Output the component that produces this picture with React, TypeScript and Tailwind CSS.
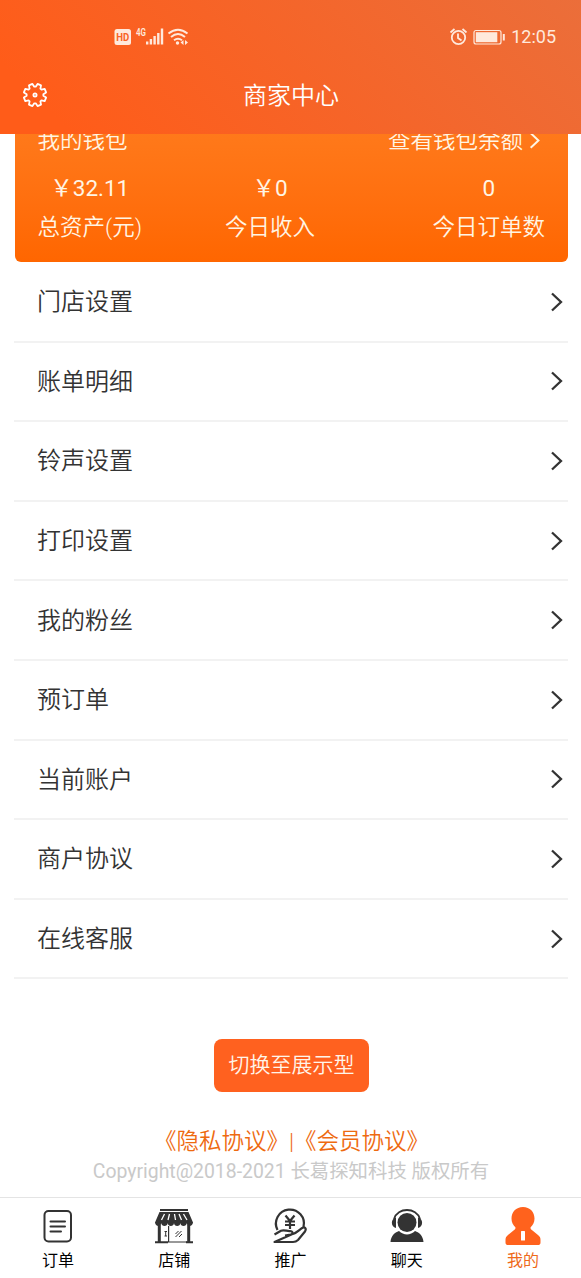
import React from 'react';

const MENU = ['门店设置', '账单明细', '铃声设置', '打印设置', '我的粉丝', '预订单', '当前账户', '商户协议', '在线客服'];

const STATS = [
  { value: '￥32.11', label: '总资产(元)', place: '' },
  { value: '￥0', label: '今日收入', place: 'ml-[83px]' },
  { value: '0', label: '今日订单数', place: 'ml-auto' },
];

const StatusBar: React.FC = () => (
  <div className="flex h-[74px] items-center justify-between pl-[114px] pr-[25px] text-[#ffe9dc]">
    <div className="flex items-center">
      <svg width="76" height="20" viewBox="0 0 76 20" fill="currentColor">
        <rect x="0.5" y="2" width="16.5" height="16" rx="2.5" />
        <text x="8.7" y="14" textAnchor="middle" fontSize="11" fontWeight="700" textLength="13" lengthAdjust="spacingAndGlyphs" fill="#f96325">HD</text>
        <text x="22" y="9" fontSize="10" fontWeight="600" textLength="10" lengthAdjust="spacingAndGlyphs">4G</text>
        <rect x="32" y="14.5" width="2.4" height="3" />
        <rect x="35.7" y="12" width="2.4" height="5.5" />
        <rect x="39.4" y="9" width="2.4" height="8.5" />
        <rect x="43.1" y="6" width="2.4" height="11.5" />
        <rect x="46.8" y="1.5" width="2.4" height="16" />
        <g fill="none" stroke="currentColor" strokeWidth="1.9">
          <path d="M54.5 6.5Q64 -1 73.5 6.5" />
          <path d="M57 10Q64 4 71 10" />
          <path d="M60 13.3Q64 10 68 13.3" />
        </g>
        <circle cx="63.5" cy="16" r="1.7" />
        <path d="M69.5 13v5l-3-2.5zM71 13v5l3-2.5z" />
      </svg>
    </div>
    <div className="flex items-center">
      <svg width="62" height="20" viewBox="0 0 62 20" fill="none" stroke="currentColor" strokeWidth="1.8">
        <circle cx="9.5" cy="10.5" r="6.7" />
        <path d="M9 6.5v4.5l3.5 2.5M1.5 5.5l4-3.5M17.5 5.5l-4-3.5" />
        <rect x="25" y="3.5" width="27" height="13.5" rx="2" strokeWidth="1.2" />
        <rect x="26.8" y="5.2" width="21.5" height="10" fill="currentColor" stroke="none" />
        <path d="M54.8 7v6.5" strokeWidth="2" />
      </svg>
      <span className="text-[18px] leading-none">12:05</span>
    </div>
  </div>
);

// eight rounded teeth around the centre, with a gap facing up
const GEAR = Array.from({ length: 8 }, (_, i) =>
  [[5, 8.4], [13, 11.4], [32, 11.4], [40, 8.4]].map(([deg, r]) => {
    const a = ((i * 45 + deg - 90) * Math.PI) / 180;
    return `${(13 + r * Math.cos(a)).toFixed(2)},${(13 + r * Math.sin(a)).toFixed(2)}`;
  }).join(' ')
).join(' ');

const GearIcon: React.FC = () => (
  <svg width="26" height="26" viewBox="0 0 26 26" fill="none" stroke="currentColor" strokeWidth="1.8" strokeLinejoin="round">
    <polygon points={GEAR} />
    <circle cx="13" cy="13" r="1.6" />
  </svg>
);

const Chevron: React.FC<{ className?: string }> = ({ className }) => (
  <svg width="14" height="22" viewBox="0 0 14 22" fill="none" stroke="currentColor" strokeWidth="2.3" className={className}>
    <path d="M2 2.5l9 8.5-9 8.5" />
  </svg>
);

const OrderIcon: React.FC = () => (
  <svg width="40" height="40" viewBox="0 0 40 40" fill="none" stroke="#333" strokeWidth="2" strokeLinecap="round">
    <rect x="6.5" y="5" width="26.5" height="30.5" rx="4" />
    <path d="M12.5 15.500h14.500M12.500 20.500h14.500M12.500 25.500h10.500" />
  </svg>
);

const ShopIcon: React.FC = () => (
  <svg width="40" height="40" viewBox="0 0 40 40" fill="#333">
    <path d="M6 3h28v2H6zM5.500 6h29l4.500 10.500H1z" />
    <path d="M1 16h38c0 5-6.300 5-6.300 1c0 4-6.300 4-6.300 0c0 4-6.400 4-6.400 0c0 4-6.300 4-6.300 0c0 4-6.400 4-6.400 0C7.300 21 1 21 1 16z" />
    <path d="M10.500 8l-3 6M15.500 8l-1.500 6M20.500 8l1 6M25 8l2.500 6M29.500 8l3.500 6" stroke="#fff" strokeWidth="1.300" />
    <path d="M3.800 19h3v16.500h-3zM33.200 19h3v16.500h-3zM1 35.300h13v2H1zM32 35.300h7v2h-7zM14 20h1.200v16H14z" />
    <path d="M10.500 25.500h2.500M10.500 30h2.500M11.700 25.500v4.500M14 36h19M21.500 28l3-3M21.500 31l6-6M25 31l3-3" stroke="#333" strokeWidth="1" />
  </svg>
);

const PromoteIcon: React.FC = () => (
  <svg width="40" height="40" viewBox="0 0 40 40" fill="none" stroke="#333" strokeWidth="2.2" strokeLinejoin="round">
    <path d="M7.500 24a14 14 0 1 1 26-3" />
    <path d="M15.500 9.500l4.500 5.500l4.500-5.500M20 14.500v8.500M15 15.500h10M15 19h10" />
    <path d="M4.500 28.500L11 24.800c3-1.300 6 .5 9 .2c3 0 3.500 3 .5 3.600L15 29.500M22 28.200c4-.7 7-4 9.800-6c3-1.800 5 .3 3.200 3.300L28 34c-1.500 1.500-3 2-5 2H4.500z" />
  </svg>
);

const ChatIcon: React.FC = () => (
  <svg width="40" height="40" viewBox="0 0 40 40" fill="#333">
    <circle cx="20" cy="16.500" r="9.500" />
    <path d="M7 13C10.500 1 29.500 1 33 13" fill="none" stroke="#333" strokeWidth="1.800" />
    <path d="M9 11.500v10.500C3.500 21 3.500 12.500 9 11.500zM31 11.500v10.500c5.500-1 5.500-9.500 0-10.500zM3.500 36c.5-6 4-9.500 8.500-11c4.500 4.500 11.500 4.500 16 0C32.500 26.500 36 30 36.500 36z" />
  </svg>
);

const MineIcon: React.FC = () => (
  <svg width="40" height="40" viewBox="0 0 40 40" fill="#ff621d">
    <path d="M20 1c7 0 11.500 5 11.500 11.500c0 4-1.500 6.500-4 9c0 1.500.5 2 2 3l5.500 4.500c2 1.500 2.500 3 2.500 5v2.500c0 2-1 2.500-3 2.500h-29c-2 0-3-.5-3-2.500v-2.500c0-2 .5-3.500 2.500-5l5.500-4.500c1.500-1 2-1.500 2-3c-2.500-2.500-4-5-4-9C8.500 6 13 1 20 1z" />
    <rect x="18" y="25" width="4" height="9.500" rx=".5" fill="#fff" />
  </svg>
);

const TABS = [
  { label: '订单', Icon: OrderIcon },
  { label: '店铺', Icon: ShopIcon },
  { label: '推广', Icon: PromoteIcon },
  { label: '聊天', Icon: ChatIcon },
  { label: '我的', Icon: MineIcon, active: true },
];

const App: React.FC = () => {
  return (
    <div className="flex h-[1278px] w-full flex-col overflow-hidden bg-white font-['Roboto','Noto_Sans_CJK_SC',sans-serif]">
      <header className="h-[134px] shrink-0 bg-linear-[45deg,#ff5c19_10%,#eb6e3a_100%]">
        <StatusBar />
        <div className="grid h-[42px] grid-cols-3 items-center px-[21.5px] text-white">
          <GearIcon />
          <h1 className="pt-px pl-px text-center text-[24px] leading-none font-[350]">商家中心</h1>
        </div>
      </header>

      <main className="min-h-0 flex-1 overflow-hidden pr-[13px] pl-[14px] font-[350]">
        <section className="-mt-[16px] ml-px h-[143.5px] rounded-md bg-linear-to-b from-[#ff7b1c] to-[#ff6600] pr-[23px] pl-[22.5px] text-[22.5px] text-[#fff5e4]">
          <div className="flex h-[44px] items-center justify-between pt-px">
            <span>我的钱包</span>
            <span className="flex items-center">
              查看钱包余额
              <Chevron className="mr-[3px] ml-[5px] h-[19px] w-[14px]" />
            </span>
          </div>
          <div className="flex pt-[7px]">
            {STATS.map(stat => (
              <div key={stat.label} className={`flex flex-col items-center leading-[38px] ${stat.place}`}>
                <span className="font-normal">{stat.value}</span>
                <span className="pt-px">{stat.label}</span>
              </div>
            ))}
          </div>
        </section>

        <ul className="pt-[1.5px]">
          {MENU.map(item => (
            <li key={item} className="flex h-[79.6px] items-center justify-between border-b-2 border-[#f2f2f2] pr-[4px] pl-[23px] text-[24px] text-[#333]">
              <span className="pt-px">{item}</span>
              <Chevron />
            </li>
          ))}
        </ul>

        <div className="flex flex-col items-center">
          <button className="mt-[60px] ml-px h-[53px] w-[155px] rounded-lg bg-[#ff611f] text-[21px] text-[#fff5ea]">切换至展示型</button>
          <p className="mt-[32px] ml-px text-[22.5px] leading-[34px] whitespace-nowrap text-[#ee6a10]">《隐私协议》|《会员协议》</p>
          <p className="text-[19.4px] leading-[27px] font-normal whitespace-nowrap text-[#c9c9c9]">Copyright@2018-2021 长葛探知科技 版权所有</p>
        </div>
      </main>

      <nav className="grid h-[81px] shrink-0 grid-cols-5 border-t border-[#e4e4e4] pt-[8px]">
        {TABS.map(({ label, Icon, active }) => (
          <div key={label} className={`flex flex-col items-center text-[16px] leading-[29px] ${active ? 'text-[#ee6a1a]' : 'text-black'}`}>
            <Icon />
            <span>{label}</span>
          </div>
        ))}
      </nav>
    </div>
  );
};

export default App;
